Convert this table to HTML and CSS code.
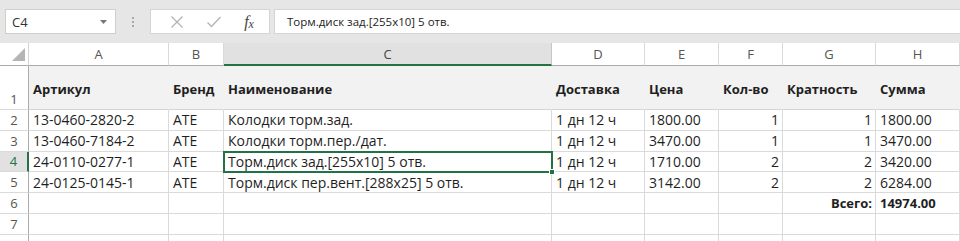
FILE: index.html
```html
<!DOCTYPE html>
<html lang="ru">
<head>
<meta charset="utf-8">
<title>Excel</title>
<link rel="stylesheet" href="styles.css">
</head>
<body>
<div class="toolbar">
  <div class="namebox">
    <span class="ref">C4</span>
    <svg class="dd" width="7" height="4" viewBox="0 0 7 4"><path d="M0 0H7L3.5 4Z" fill="#777"/></svg>
  </div>
  <div class="grip"><i></i><i></i><i></i></div>
  <div class="fbtns">
    <svg class="ico" width="14" height="14" viewBox="0 0 14 14"><path d="M1.5 1.5L12.5 12.5M12.5 1.5L1.5 12.5" stroke="#b3b3b3" stroke-width="1.3" fill="none"/></svg>
    <svg class="ico" width="16" height="14" viewBox="0 0 16 14"><path d="M1.5 7.5L5.5 11.5L14.5 2" stroke="#b3b3b3" stroke-width="1.3" fill="none"/></svg>
    <span class="fx">f<sub>x</sub></span>
  </div>
  <div class="finput">Торм.диск зад.[255x10] 5 отв.</div>
</div>
<div class="sheet">
  <div class="corner"><svg width="13" height="13" viewBox="0 0 13 13"><path d="M13 0V13H0Z" fill="#b5b5b5"/></svg></div>
  <div class="ch">A</div><div class="ch">B</div><div class="ch sel">C</div><div class="ch">D</div><div class="ch">E</div><div class="ch">F</div><div class="ch">G</div><div class="ch">H</div>

  <div class="rh rh1">1</div>
  <div class="c h">Артикул</div><div class="c h">Бренд</div><div class="c h">Наименование</div><div class="c h">Доставка</div><div class="c h">Цена</div><div class="c h">Кол-во</div><div class="c h">Кратность</div><div class="c h">Сумма</div>

  <div class="rh">2</div>
  <div class="c">13-0460-2820-2</div><div class="c">ATE</div><div class="c">Колодки торм.зад.</div><div class="c">1 дн 12 ч</div><div class="c">1800.00</div><div class="c r">1</div><div class="c r">1</div><div class="c">1800.00</div>

  <div class="rh">3</div>
  <div class="c">13-0460-7184-2</div><div class="c">ATE</div><div class="c">Колодки торм.пер./дат.</div><div class="c">1 дн 12 ч</div><div class="c">3470.00</div><div class="c r">1</div><div class="c r">1</div><div class="c">3470.00</div>

  <div class="rh rsel">4</div>
  <div class="c">24-0110-0277-1</div><div class="c">ATE</div><div class="c active">Торм.диск зад.[255x10] 5 отв.<span class="handle"></span></div><div class="c">1 дн 12 ч</div><div class="c">1710.00</div><div class="c r">2</div><div class="c r">2</div><div class="c">3420.00</div>

  <div class="rh">5</div>
  <div class="c">24-0125-0145-1</div><div class="c">ATE</div><div class="c">Торм.диск пер.вент.[288x25] 5 отв.</div><div class="c">1 дн 12 ч</div><div class="c">3142.00</div><div class="c r">2</div><div class="c r">2</div><div class="c">6284.00</div>

  <div class="rh">6</div>
  <div class="c"></div><div class="c"></div><div class="c"></div><div class="c"></div><div class="c"></div><div class="c"></div><div class="c r b">Всего:</div><div class="c b">14974.00</div>

  <div class="rh">7</div>
  <div class="c"></div><div class="c"></div><div class="c"></div><div class="c"></div><div class="c"></div><div class="c"></div><div class="c"></div><div class="c"></div>

  <div class="rh last"></div>
  <div class="c last"></div><div class="c last"></div><div class="c last"></div><div class="c last"></div><div class="c last"></div><div class="c last"></div><div class="c last"></div><div class="c last"></div>
</div>
</body>
</html>
```
FILE: styles.css
```css
* { box-sizing: border-box; }
html, body { margin: 0; padding: 0; background: #fff; overflow: hidden; }
body { width: 960px; height: 241px; font-family: "Open Sans", "Noto Sans", sans-serif; }

.toolbar {
  height: 43px;
  background: #e6e6e6;
  display: flex;
  align-items: flex-start;
  padding: 9px 0 0 5px;
}
.namebox {
  width: 111px;
  height: 25px;
  background: #fff;
  border: 1px solid #cfcfcf;
  display: flex;
  align-items: center;
  justify-content: space-between;
  padding: 0 8px 0 6px;
  font-size: 13px;
  color: #333;
}
.grip {
  width: 34px;
  height: 25px;
  display: flex;
  flex-direction: column;
  align-items: center;
  justify-content: center;
  gap: 2px;
}
.grip i { display: block; width: 2px; height: 2px; background: #a8a8a8; }
.fbtns {
  width: 120px;
  height: 25px;
  background: #fff;
  border: 1px solid #d5d5d5;
  display: flex;
  align-items: center;
  justify-content: space-around;
  padding: 0 4px 0 8px;
}
.fx {
  font-family: "Liberation Serif", serif;
  font-style: italic;
  font-size: 16px;
  color: #444;
  line-height: 1;
}
.fx sub { font-size: 12px; vertical-align: -1px; }
.finput {
  flex: 1;
  margin-left: 4px;
  height: 25px;
  background: #fff;
  border: 1px solid #d5d5d5;
  border-right: 0;
  display: flex;
  align-items: center;
  padding-left: 12px;
  font-size: 11.5px;
  color: #222;
}

.sheet {
  display: grid;
  grid-template-columns: 29px 140px 55px 328px 93px 74px 64px 93px 84px;
  grid-template-rows: 23px 44px repeat(6, 20.8px) 6.2px;
  font-size: 14px;
  color: #1f1f1f;
}
.corner {
  border-right: 1px solid #d4d4d4;
  border-bottom: 1px solid #ababab;
  display: flex;
  align-items: flex-end;
  justify-content: flex-end;
  padding: 0 3px 4px 0;
  background: #fff;
}
.ch {
  border-right: 1px solid #dadada;
  border-bottom: 1px solid #ababab;
  display: flex;
  align-items: center;
  justify-content: center;
  color: #555;
  font-size: 13px;
  background: #fff;
}
.ch.sel {
  background: #e1e1e1;
  border-bottom: 2px solid #217346;
  color: #444;
  border-right-color: #c6c6c6;
}
.rh {
  border-right: 1px solid #ababab;
  border-bottom: 1px solid #dadada;
  display: flex;
  align-items: center;
  justify-content: center;
  color: #555;
  font-size: 13px;
}
.rh1 { align-items: flex-end; padding-bottom: 1px; }
.rh.rsel {
  background: #e1e1e1;
  color: #217346;
  border-right: 2px solid #217346;
}
.c {
  border-right: 1px solid #dadada;
  border-bottom: 1px solid #dadada;
  display: flex;
  align-items: center;
  padding: 0 4px;
  white-space: nowrap;
  position: relative;
}
.last { border-bottom: 0; }
.c.h {
  font-weight: 700;
  font-size: 13px;
  background: #f2f2f2;
  border-right-color: #f2f2f2;
  border-bottom-color: #d4d4d4;
  padding-top: 2px;
}
.c.r { justify-content: flex-end; padding-right: 3px; }
.c.b { font-weight: 700; font-size: 13px; }
.c.active {
  outline: 2px solid #217346;
  outline-offset: -1px;
  z-index: 1;
}
.handle {
  position: absolute;
  right: -4px;
  bottom: -4px;
  width: 6px;
  height: 6px;
  background: #217346;
  border: 1px solid #fff;
}
```
